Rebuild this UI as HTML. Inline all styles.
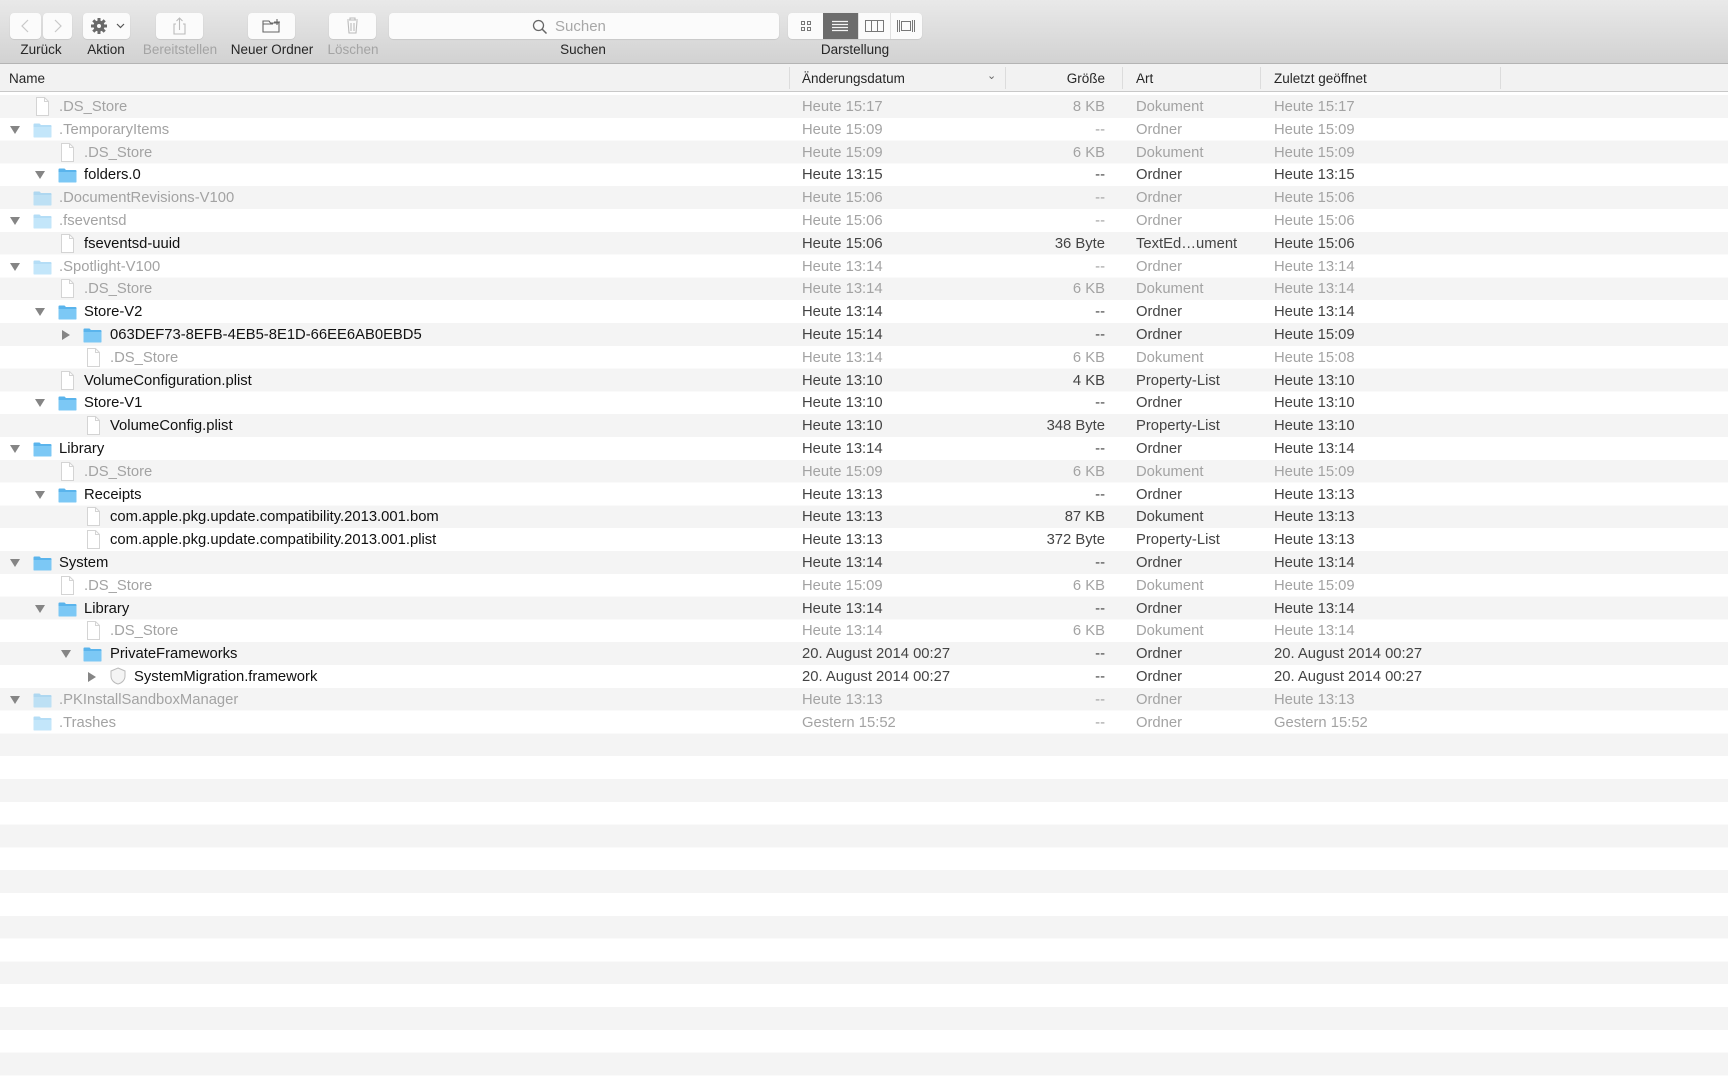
<!DOCTYPE html>
<html><head><meta charset="utf-8"><style>
*{margin:0;padding:0;box-sizing:border-box}
body{width:1728px;height:1080px;overflow:hidden;font-family:"Liberation Sans",sans-serif;background:#fff;position:relative}
#tb{position:absolute;left:0;top:0;width:1728px;height:64px;background:linear-gradient(#e9e9e9,#d2d2d2);border-bottom:1px solid #b4b4b4}
.btn{position:absolute;top:13px;height:26px;background:#fbfbfb;border-radius:4px;box-shadow:0 0.5px 1px rgba(0,0,0,.15)}
.lbl{position:absolute;top:42px;font-size:13.5px;color:#262626;transform:translateX(-50%);white-space:nowrap}
.lbl.dis{color:#a4a4a4}
#hdr{position:absolute;top:64px;left:0;width:1728px;height:28px;background:#f2f2f2;border-bottom:1px solid #c8c8c8;font-size:13.5px;color:#262626}
#hdr span{position:absolute;top:7px}
#hdr i{position:absolute;top:3px;width:1px;height:22px;background:#dcdcdc}
#list{position:absolute;top:95px;left:0;width:1728px;height:985px;background:repeating-linear-gradient(#f4f4f4 0,#f4f4f4 22.8px,#fff 22.8px,#fff 45.6px)}
.r{position:relative;height:22.8px;font-size:14.8px;color:#111;white-space:nowrap}
.r.g{color:#a3a3a3}
.r>*{position:absolute;top:4px}
.d{left:802px;color:#444}.s{right:623px;color:#444}.k{left:1136px;color:#444}.l{left:1274px;color:#444}
.r.g .d,.r.g .s,.r.g .k,.r.g .l{color:#a3a3a3}
.tri{top:8px;width:0;height:0;border-left:5px solid transparent;border-right:5px solid transparent;border-top:8px solid #858585}
.tri.c{top:7px;border-top:5px solid transparent;border-bottom:5px solid transparent;border-left:8px solid #858585;border-right:0}
.r>.ic{top:2px}
.r.g .ic.fo{opacity:.45}
</style></head><body>
<div id="tb">
 <div class="btn" style="left:10px;width:31px"><svg width="31" height="26"><path d="M18 7l-6 6 6 6" fill="none" stroke="#c8c8c8" stroke-width="1.2"/></svg></div>
 <div class="btn" style="left:43px;width:29px"><svg width="29" height="26"><path d="M12 7l6 6-6 6" fill="none" stroke="#c8c8c8" stroke-width="1.2"/></svg></div>
 <div class="btn" style="left:83px;width:47px"><svg width="47" height="26"><g transform="translate(16,13)" fill="#6a6a6a"><circle r="5.5"/><g stroke="#6a6a6a" stroke-width="3"><path d="M0-8v16M-8 0h16M-5.7-5.7l11.4 11.4M-5.7 5.7l11.4-11.4"/></g><circle r="2" fill="#fbfbfb"/></g><path d="M34 11l3.5 3.5 3.5-3.5" fill="none" stroke="#555" stroke-width="1.2"/></svg></div>
 <div class="btn" style="left:156px;width:47px"><svg width="47" height="26"><path d="M20 11h-2v10h11V11h-2M23.5 17V5M20.5 8l3-3 3 3" fill="none" stroke="#bbb" stroke-width="1.1"/></svg></div>
 <div class="btn" style="left:248px;width:47px"><svg width="47" height="26"><path d="M15 8h6l1.5 2H31v9H15zM15 11h10M29 6v6M26 9h6" fill="none" stroke="#666" stroke-width="1.1"/></svg></div>
 <div class="btn" style="left:329px;width:47px"><svg width="47" height="26"><path d="M18 7h11M21 7V5h5v2M19 8l1 12h7l1-12M22 10v8M25 10v8" fill="none" stroke="#bbb" stroke-width="1.1"/></svg></div>
 <div class="btn" style="left:389px;width:390px"><svg style="position:absolute;left:143px;top:6px" width="16" height="16"><circle cx="6.5" cy="6.5" r="5" fill="none" stroke="#666" stroke-width="1.3"/><path d="M10 10l4.5 4.5" stroke="#666" stroke-width="1.5"/></svg><span style="position:absolute;left:166px;top:5px;font-size:15px;color:#a8a8a8">Suchen</span></div>
 <div class="btn" style="left:788px;width:134px;overflow:hidden">
  <svg width="134" height="26"><g fill="none" stroke="#777" stroke-width="1"><rect x="13.5" y="8.5" width="3" height="3"/><rect x="19.5" y="8.5" width="3" height="3"/><rect x="13.5" y="14.5" width="3" height="3"/><rect x="19.5" y="14.5" width="3" height="3"/></g>
  <rect x="35" y="0" width="35" height="26" fill="#6c6c6c"/><path d="M44 8.5h16M44 11.5h16M44 14.5h16M44 17.5h16" stroke="#f4f4f4" stroke-width="1.2"/>
  <path d="M70.5 0v26M102.5 0v26" stroke="#e0e0e0"/>
  <g fill="none" stroke="#777"><rect x="77.5" y="7.5" width="18" height="11"/><path d="M83.5 7.5v11M89.5 7.5v11"/><rect x="113.5" y="8.5" width="9" height="9"/><path d="M109.5 7v12M111.5 7v12M124.5 7v12M126.5 7v12"/></g></svg></div>
 <div class="lbl" style="left:41px">Zurück</div>
 <div class="lbl" style="left:106px">Aktion</div>
 <div class="lbl dis" style="left:180px">Bereitstellen</div>
 <div class="lbl" style="left:272px">Neuer Ordner</div>
 <div class="lbl dis" style="left:353px">Löschen</div>
 <div class="lbl" style="left:583px">Suchen</div>
 <div class="lbl" style="left:855px">Darstellung</div>
</div>
<div id="hdr">
 <span style="left:9px">Name</span>
 <i style="left:789px"></i><span style="left:802px">Änderungsdatum</span><span style="left:987px;top:5px;font-size:11px;color:#666">&#8964;</span>
 <i style="left:1005px"></i><span style="right:623px">Größe</span>
 <i style="left:1122px"></i><span style="left:1136px">Art</span>
 <i style="left:1260px"></i><span style="left:1274px">Zuletzt geöffnet</span>
 <i style="left:1500px"></i>
</div>
<svg width="0" height="0" style="position:absolute"><defs>
<symbol id="fo" viewBox="0 0 19 16"><path d="M0.5 2.5a1 1 0 0 1 1-1h5l1.5 1.5h9.5a1 1 0 0 1 1 1v10.5a1 1 0 0 1-1 1h-16a1 1 0 0 1-1-1z" fill="#5ab4ec"/><path d="M0.5 5h18v9.5a1 1 0 0 1-1 1h-16a1 1 0 0 1-1-1z" fill="#7cc8f5"/></symbol>
<symbol id="fi" viewBox="0 0 15 19"><path d="M1.5 0.5h8l4 4v14h-12z" fill="#fff" stroke="#d4d4d4"/><path d="M9.5 0.5v4h4" fill="none" stroke="#d4d4d4"/></symbol>
<symbol id="fw" viewBox="0 0 18 18"><path d="M9 1l7 3v5c0 4-3 7-7 8-4-1-7-4-7-8V4z" fill="#f4f4f4" stroke="#bbb"/></symbol>
</defs></svg>
<div id="list">
<div class="r g"><svg class="ic" style="left:35px" width="15" height="19"><use href="#fi"/></svg><span style="left:59px">.DS_Store</span><span class="d">Heute 15:17</span><span class="s">8 KB</span><span class="k">Dokument</span><span class="l">Heute 15:17</span></div>
<div class="r g"><i class="tri" style="left:10px"></i><svg class="ic fo" style="left:33px;top:4px" width="19" height="16"><use href="#fo"/></svg><span style="left:59px">.TemporaryItems</span><span class="d">Heute 15:09</span><span class="s">--</span><span class="k">Ordner</span><span class="l">Heute 15:09</span></div>
<div class="r g"><svg class="ic" style="left:60px" width="15" height="19"><use href="#fi"/></svg><span style="left:84px">.DS_Store</span><span class="d">Heute 15:09</span><span class="s">6 KB</span><span class="k">Dokument</span><span class="l">Heute 15:09</span></div>
<div class="r"><i class="tri" style="left:35px"></i><svg class="ic fo" style="left:58px;top:4px" width="19" height="16"><use href="#fo"/></svg><span style="left:84px">folders.0</span><span class="d">Heute 13:15</span><span class="s">--</span><span class="k">Ordner</span><span class="l">Heute 13:15</span></div>
<div class="r g"><svg class="ic fo" style="left:33px;top:4px" width="19" height="16"><use href="#fo"/></svg><span style="left:59px">.DocumentRevisions-V100</span><span class="d">Heute 15:06</span><span class="s">--</span><span class="k">Ordner</span><span class="l">Heute 15:06</span></div>
<div class="r g"><i class="tri" style="left:10px"></i><svg class="ic fo" style="left:33px;top:4px" width="19" height="16"><use href="#fo"/></svg><span style="left:59px">.fseventsd</span><span class="d">Heute 15:06</span><span class="s">--</span><span class="k">Ordner</span><span class="l">Heute 15:06</span></div>
<div class="r"><svg class="ic" style="left:60px" width="15" height="19"><use href="#fi"/></svg><span style="left:84px">fseventsd-uuid</span><span class="d">Heute 15:06</span><span class="s">36 Byte</span><span class="k">TextEd…ument</span><span class="l">Heute 15:06</span></div>
<div class="r g"><i class="tri" style="left:10px"></i><svg class="ic fo" style="left:33px;top:4px" width="19" height="16"><use href="#fo"/></svg><span style="left:59px">.Spotlight-V100</span><span class="d">Heute 13:14</span><span class="s">--</span><span class="k">Ordner</span><span class="l">Heute 13:14</span></div>
<div class="r g"><svg class="ic" style="left:60px" width="15" height="19"><use href="#fi"/></svg><span style="left:84px">.DS_Store</span><span class="d">Heute 13:14</span><span class="s">6 KB</span><span class="k">Dokument</span><span class="l">Heute 13:14</span></div>
<div class="r"><i class="tri" style="left:35px"></i><svg class="ic fo" style="left:58px;top:4px" width="19" height="16"><use href="#fo"/></svg><span style="left:84px">Store-V2</span><span class="d">Heute 13:14</span><span class="s">--</span><span class="k">Ordner</span><span class="l">Heute 13:14</span></div>
<div class="r"><i class="tri c" style="left:62px"></i><svg class="ic fo" style="left:83px;top:4px" width="19" height="16"><use href="#fo"/></svg><span style="left:110px">063DEF73-8EFB-4EB5-8E1D-66EE6AB0EBD5</span><span class="d">Heute 15:14</span><span class="s">--</span><span class="k">Ordner</span><span class="l">Heute 15:09</span></div>
<div class="r g"><svg class="ic" style="left:86px" width="15" height="19"><use href="#fi"/></svg><span style="left:110px">.DS_Store</span><span class="d">Heute 13:14</span><span class="s">6 KB</span><span class="k">Dokument</span><span class="l">Heute 15:08</span></div>
<div class="r"><svg class="ic" style="left:60px" width="15" height="19"><use href="#fi"/></svg><span style="left:84px">VolumeConfiguration.plist</span><span class="d">Heute 13:10</span><span class="s">4 KB</span><span class="k">Property-List</span><span class="l">Heute 13:10</span></div>
<div class="r"><i class="tri" style="left:35px"></i><svg class="ic fo" style="left:58px;top:4px" width="19" height="16"><use href="#fo"/></svg><span style="left:84px">Store-V1</span><span class="d">Heute 13:10</span><span class="s">--</span><span class="k">Ordner</span><span class="l">Heute 13:10</span></div>
<div class="r"><svg class="ic" style="left:86px" width="15" height="19"><use href="#fi"/></svg><span style="left:110px">VolumeConfig.plist</span><span class="d">Heute 13:10</span><span class="s">348 Byte</span><span class="k">Property-List</span><span class="l">Heute 13:10</span></div>
<div class="r"><i class="tri" style="left:10px"></i><svg class="ic fo" style="left:33px;top:4px" width="19" height="16"><use href="#fo"/></svg><span style="left:59px">Library</span><span class="d">Heute 13:14</span><span class="s">--</span><span class="k">Ordner</span><span class="l">Heute 13:14</span></div>
<div class="r g"><svg class="ic" style="left:60px" width="15" height="19"><use href="#fi"/></svg><span style="left:84px">.DS_Store</span><span class="d">Heute 15:09</span><span class="s">6 KB</span><span class="k">Dokument</span><span class="l">Heute 15:09</span></div>
<div class="r"><i class="tri" style="left:35px"></i><svg class="ic fo" style="left:58px;top:4px" width="19" height="16"><use href="#fo"/></svg><span style="left:84px">Receipts</span><span class="d">Heute 13:13</span><span class="s">--</span><span class="k">Ordner</span><span class="l">Heute 13:13</span></div>
<div class="r"><svg class="ic" style="left:86px" width="15" height="19"><use href="#fi"/></svg><span style="left:110px">com.apple.pkg.update.compatibility.2013.001.bom</span><span class="d">Heute 13:13</span><span class="s">87 KB</span><span class="k">Dokument</span><span class="l">Heute 13:13</span></div>
<div class="r"><svg class="ic" style="left:86px" width="15" height="19"><use href="#fi"/></svg><span style="left:110px">com.apple.pkg.update.compatibility.2013.001.plist</span><span class="d">Heute 13:13</span><span class="s">372 Byte</span><span class="k">Property-List</span><span class="l">Heute 13:13</span></div>
<div class="r"><i class="tri" style="left:10px"></i><svg class="ic fo" style="left:33px;top:4px" width="19" height="16"><use href="#fo"/></svg><span style="left:59px">System</span><span class="d">Heute 13:14</span><span class="s">--</span><span class="k">Ordner</span><span class="l">Heute 13:14</span></div>
<div class="r g"><svg class="ic" style="left:60px" width="15" height="19"><use href="#fi"/></svg><span style="left:84px">.DS_Store</span><span class="d">Heute 15:09</span><span class="s">6 KB</span><span class="k">Dokument</span><span class="l">Heute 15:09</span></div>
<div class="r"><i class="tri" style="left:35px"></i><svg class="ic fo" style="left:58px;top:4px" width="19" height="16"><use href="#fo"/></svg><span style="left:84px">Library</span><span class="d">Heute 13:14</span><span class="s">--</span><span class="k">Ordner</span><span class="l">Heute 13:14</span></div>
<div class="r g"><svg class="ic" style="left:86px" width="15" height="19"><use href="#fi"/></svg><span style="left:110px">.DS_Store</span><span class="d">Heute 13:14</span><span class="s">6 KB</span><span class="k">Dokument</span><span class="l">Heute 13:14</span></div>
<div class="r"><i class="tri" style="left:61px"></i><svg class="ic fo" style="left:83px;top:4px" width="19" height="16"><use href="#fo"/></svg><span style="left:110px">PrivateFrameworks</span><span class="d">20. August 2014 00:27</span><span class="s">--</span><span class="k">Ordner</span><span class="l">20. August 2014 00:27</span></div>
<div class="r"><i class="tri c" style="left:88px"></i><svg class="ic" style="left:109px" width="18" height="18"><use href="#fw"/></svg><span style="left:134px">SystemMigration.framework</span><span class="d">20. August 2014 00:27</span><span class="s">--</span><span class="k">Ordner</span><span class="l">20. August 2014 00:27</span></div>
<div class="r g"><i class="tri" style="left:10px"></i><svg class="ic fo" style="left:33px;top:4px" width="19" height="16"><use href="#fo"/></svg><span style="left:59px">.PKInstallSandboxManager</span><span class="d">Heute 13:13</span><span class="s">--</span><span class="k">Ordner</span><span class="l">Heute 13:13</span></div>
<div class="r g"><svg class="ic fo" style="left:33px;top:4px" width="19" height="16"><use href="#fo"/></svg><span style="left:59px">.Trashes</span><span class="d">Gestern 15:52</span><span class="s">--</span><span class="k">Ordner</span><span class="l">Gestern 15:52</span></div>
</div>
</body></html>
